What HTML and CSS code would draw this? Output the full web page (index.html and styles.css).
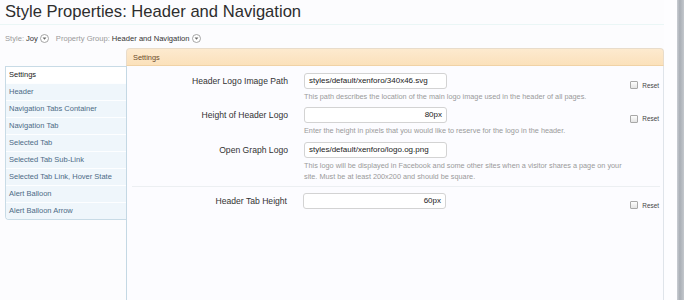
FILE: index.html
```html
<!DOCTYPE html>
<html lang="en">
<head>
  <meta charset="UTF-8" />
  <title>Style Properties: Header and Navigation</title>
  <link rel="stylesheet" href="styles.css">
</head>
<body>
  <div class="window">
    <div class="page">
      <h1 class="title">Style Properties: Header and Navigation</h1>

      <div class="crumbs">
        <span class="crumb-label">Style:</span><span class="crumb-value">Joy</span>
        <svg class="drop" width="9" height="9" viewBox="0 0 9 9"><circle cx="4.5" cy="4.5" r="4" fill="#fff" stroke="#9a9a9a" stroke-width="0.9"/><path d="M2.6 3.5h3.8L4.5 5.8z" fill="#666"/></svg>
        <span class="crumb-label second">Property Group:</span><span class="crumb-value">Header and Navigation</span>
        <svg class="drop" width="9" height="9" viewBox="0 0 9 9"><circle cx="4.5" cy="4.5" r="4" fill="#fff" stroke="#9a9a9a" stroke-width="0.9"/><path d="M2.6 3.5h3.8L4.5 5.8z" fill="#666"/></svg>
      </div>

      <div class="layout">
        <div class="side">
          <ul class="side-list">
            <li class="active">Settings</li>
            <li>Header</li>
            <li>Navigation Tabs Container</li>
            <li>Navigation Tab</li>
            <li>Selected Tab</li>
            <li>Selected Tab Sub-Link</li>
            <li>Selected Tab Link, Hover State</li>
            <li>Alert Balloon</li>
            <li>Alert Balloon Arrow</li>
          </ul>
        </div>

        <div class="panel">
          <div class="panel-head">Settings</div>
          <div class="panel-body">
            <div class="row">
              <label class="row-label">Header Logo Image Path</label>
              <div class="field">styles/default/xenforo/340x46.svg</div>
              <div class="reset"><span class="check"></span>Reset</div>
              <p class="hint">This path describes the location of the main logo image used in the header of all pages.</p>
            </div>

            <div class="row">
              <label class="row-label">Height of Header Logo</label>
              <div class="field num">80px</div>
              <div class="reset"><span class="check"></span>Reset</div>
              <p class="hint">Enter the height in pixels that you would like to reserve for the logo in the header.</p>
            </div>

            <div class="row og">
              <label class="row-label">Open Graph Logo</label>
              <div class="field">styles/default/xenforo/logo.og.png</div>
              <div></div>
              <p class="hint">This logo will be displayed in Facebook and some other sites when a visitor shares a page on your site. Must be at least 200x200 and should be square.</p>
            </div>

            <div class="row last">
              <label class="row-label">Header Tab Height</label>
              <div class="field num">60px</div>
              <div class="reset"><span class="check"></span>Reset</div>
            </div>
          </div>
        </div>
      </div>
    </div>
    <div class="frame"></div>
  </div>
</body>
</html>
```

FILE: styles.css
```css
* {
  box-sizing: border-box;
  margin: 0;
  padding: 0;
}
body {
  background: #fdfdff;
  color: #333;
  font-family: 'Liberation Sans', Arial, sans-serif;
  height: 300px;
  overflow: hidden;
}
.window {
  display: flex;
  height: 300px;
}
.page {
  width: 664px;
  background: #fcfcfe;
  display: flex;
  flex-direction: column;
}
.frame {
  margin-left: auto;
  width: 7px;
  background: linear-gradient(to right, #c9cdd3, #a9aeb5 40%, #c3c7cc);
}
.title {
  font-size: 16.6px;
  font-weight: normal;
  color: #2d2d2d;
  padding: 2px 5px 0;
  height: 25px;
  border-bottom: 1px solid #eaf6f6;
}
.crumbs {
  display: flex;
  align-items: center;
  padding: 4px 5px 0;
  height: 23px;
  font-size: 7.6px;
}
.crumb-label {
  color: #9a9a9a;
  margin-right: 2px;
}
.crumb-label.second {
  margin-left: 7px;
}
.crumb-value {
  color: #333;
}
.drop {
  margin-left: 2px;
}
.layout {
  display: grid;
  grid-template-columns: 121px 538px;
  margin-left: 5px;
  flex: 1;
}
.side {
  padding-top: 18px;
}
.side-list {
  list-style: none;
  border: 1px solid #c8dbe6;
  border-right: none;
  border-radius: 0 0 0 4px;
  overflow: hidden;
}
.side-list li {
  height: 17px;
  line-height: 16px;
  padding-left: 3px;
  font-size: 7.5px;
  color: #4d6b86;
  background: #eff6fb;
  border-top: 1px solid #fdfeff;
}
.side-list li.active {
  background: #fff;
  color: #222;
  border-top: none;
  height: 16px;
}
.panel {
  display: flex;
  flex-direction: column;
}
.panel-head {
  height: 18px;
  line-height: 17px;
  padding-left: 6px;
  font-size: 7.4px;
  color: #6a4b2b;
  background: linear-gradient(#fdeacf, #fbe1bb);
  border: 1px solid #e8dccb;
  border-bottom-color: #f0d2a6;
  border-radius: 4px 4px 0 0;
}
.panel-body {
  flex: 1;
  border-left: 1px solid #c4d8e4;
  border-right: 1px solid #dfe4ea;
  padding: 7px 0 0 0;
  background: #fcfcff;
}
.row {
  display: grid;
  grid-template-columns: 161px 143px 1fr;
  column-gap: 16px;
  align-items: center;
  margin-bottom: 4px;
}
.row.og {
  margin-top: 6px;
}
.row.last {
  border-top: 1px solid #eceff2;
  margin: 2px 3px 0 5px;
  padding-top: 6px;
  grid-template-columns: 155px 143px 1fr;
}
.row.last .reset {
  margin-right: 1px;
}
.row-label {
  text-align: right;
  font-size: 8.6px;
  color: #333;
}
.field {
  height: 16px;
  line-height: 14px;
  padding: 0 4px;
  font-size: 8px;
  color: #222;
  background: #fff;
  border: 1px solid #d3d3d3;
  border-radius: 3px;
}
.field.num {
  text-align: right;
}
.reset {
  align-self: end;
  justify-self: end;
  display: flex;
  align-items: center;
  font-size: 6.4px;
  color: #444;
  margin-right: 4px;
}
.check {
  width: 8px;
  height: 8px;
  margin-right: 4px;
  border: 1px solid #a8a8a8;
  border-radius: 1px;
  background: linear-gradient(#fdfdfd, #e4e4e4);
}
.hint {
  grid-column: 2 / 4;
  margin-top: 3px;
  font-size: 7.3px;
  line-height: 10.5px;
  color: #9a9a9a;
  padding-right: 30px;
}
```
